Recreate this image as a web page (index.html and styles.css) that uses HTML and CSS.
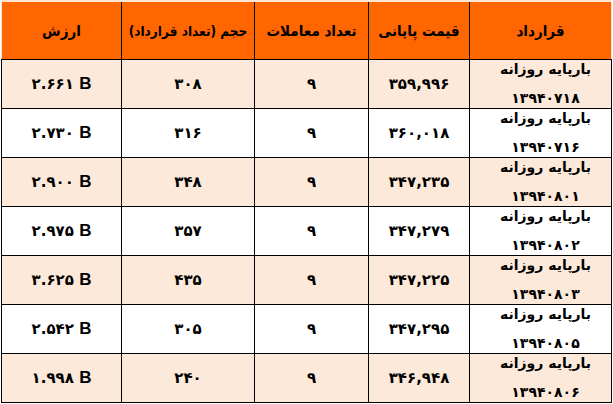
FILE: index.html
```html
<!DOCTYPE html>
<html lang="fa" dir="rtl">
<head>
<meta charset="utf-8">
<link rel="stylesheet" href="styles.css">
</head>
<body>
<table class="grid">
  <colgroup>
    <col class="c-contract">
    <col class="c-price">
    <col class="c-count">
    <col class="c-vol">
    <col class="c-value">
  </colgroup>
  <thead>
    <tr>
      <th>قرارداد</th>
      <th>قیمت پایانی</th>
      <th>تعداد معاملات</th>
      <th class="tight">حجم (تعداد قرارداد)</th>
      <th>ارزش</th>
    </tr>
  </thead>
  <tbody>
    <tr class="alt">
      <td class="contract"><div class="two"><span>بارپایه روزانه</span><span>۱۳۹۴۰۷۱۸</span></div></td>
      <td>۳۵۹,۹۹۶</td><td>۹</td><td>۳۰۸</td>
      <td><span class="val">۲.۶۶۱ <span class="b">B</span></span></td>
    </tr>
    <tr>
      <td class="contract"><div class="two"><span>بارپایه روزانه</span><span>۱۳۹۴۰۷۱۶</span></div></td>
      <td>۳۶۰,۰۱۸</td><td>۹</td><td>۳۱۶</td>
      <td><span class="val">۲.۷۳۰ <span class="b">B</span></span></td>
    </tr>
    <tr class="alt">
      <td class="contract"><div class="two"><span>بارپایه روزانه</span><span>۱۳۹۴۰۸۰۱</span></div></td>
      <td>۳۴۷,۲۳۵</td><td>۹</td><td>۳۴۸</td>
      <td><span class="val">۲.۹۰۰ <span class="b">B</span></span></td>
    </tr>
    <tr>
      <td class="contract"><div class="two"><span>بارپایه روزانه</span><span>۱۳۹۴۰۸۰۲</span></div></td>
      <td>۳۴۷,۲۷۹</td><td>۹</td><td>۳۵۷</td>
      <td><span class="val">۲.۹۷۵ <span class="b">B</span></span></td>
    </tr>
    <tr class="alt">
      <td class="contract"><div class="two"><span>بارپایه روزانه</span><span>۱۳۹۴۰۸۰۳</span></div></td>
      <td>۳۴۷,۲۲۵</td><td>۹</td><td>۴۳۵</td>
      <td><span class="val">۳.۶۲۵ <span class="b">B</span></span></td>
    </tr>
    <tr>
      <td class="contract"><div class="two"><span>بارپایه روزانه</span><span>۱۳۹۴۰۸۰۵</span></div></td>
      <td>۳۴۷,۲۹۵</td><td>۹</td><td>۳۰۵</td>
      <td><span class="val">۲.۵۴۲ <span class="b">B</span></span></td>
    </tr>
    <tr class="alt">
      <td class="contract"><div class="two"><span>بارپایه روزانه</span><span>۱۳۹۴۰۸۰۶</span></div></td>
      <td>۳۴۶,۹۴۸</td><td>۹</td><td>۲۴۰</td>
      <td><span class="val">۱.۹۹۸ <span class="b">B</span></span></td>
    </tr>
  </tbody>
</table>
</body>
</html>
```
FILE: styles.css
```css
html, body {
  margin: 0;
  padding: 0;
  background: #ffffff;
}
body {
  padding: 0 1px 0 1px;
  font-family: "DejaVu Sans", "Noto Sans", sans-serif;
  color: #000;
}
.grid {
  border-collapse: collapse;
  table-layout: fixed;
  width: 611px;
  direction: rtl;
}
.c-contract { width: 142px; }
.c-price { width: 101px; }
.c-count { width: 114px; }
.c-vol { width: 133px; }
.c-value { width: 120px; }

.grid th {
  background: #ff6600;
  height: 57px;
  padding: 0;
  font-family: "DejaVu Sans Condensed", "DejaVu Sans", sans-serif;
  font-size: 15px;
  font-weight: bold;
  white-space: nowrap;
  text-align: center;
  vertical-align: middle;
  border-left: 1px solid #000;
  border-right: 1px solid #000;
  border-top: 2px solid #fbe6d6;
  border-bottom: 1px solid #000;
}
.grid th.tight { font-size: 13.5px; }
.grid th:first-child { border-right: 1px solid #fbe6d6; }
.grid th:last-child { border-left: 1px solid #fbe6d6; }

.grid td {
  height: 48px;
  padding: 0;
  border: 1px solid #000;
  text-align: center;
  vertical-align: middle;
  font-size: 15px;
  font-weight: bold;
  background: #ffffff;
}
.grid tr.alt td { background: #fde9d9; }

.grid td.contract {
  font-size: 14px;
  padding-left: 10px;
}
.two {
  height: 48px;
  display: flex;
  flex-direction: column;
  justify-content: center;
  align-items: center;
  line-height: 29px;
  white-space: nowrap;
}
.val {
  direction: ltr;
  unicode-bidi: isolate;
  display: inline-block;
}
.b {
  font-family: "Liberation Sans", Arial, sans-serif;
  font-size: 17px;
  font-weight: bold;
}
```
